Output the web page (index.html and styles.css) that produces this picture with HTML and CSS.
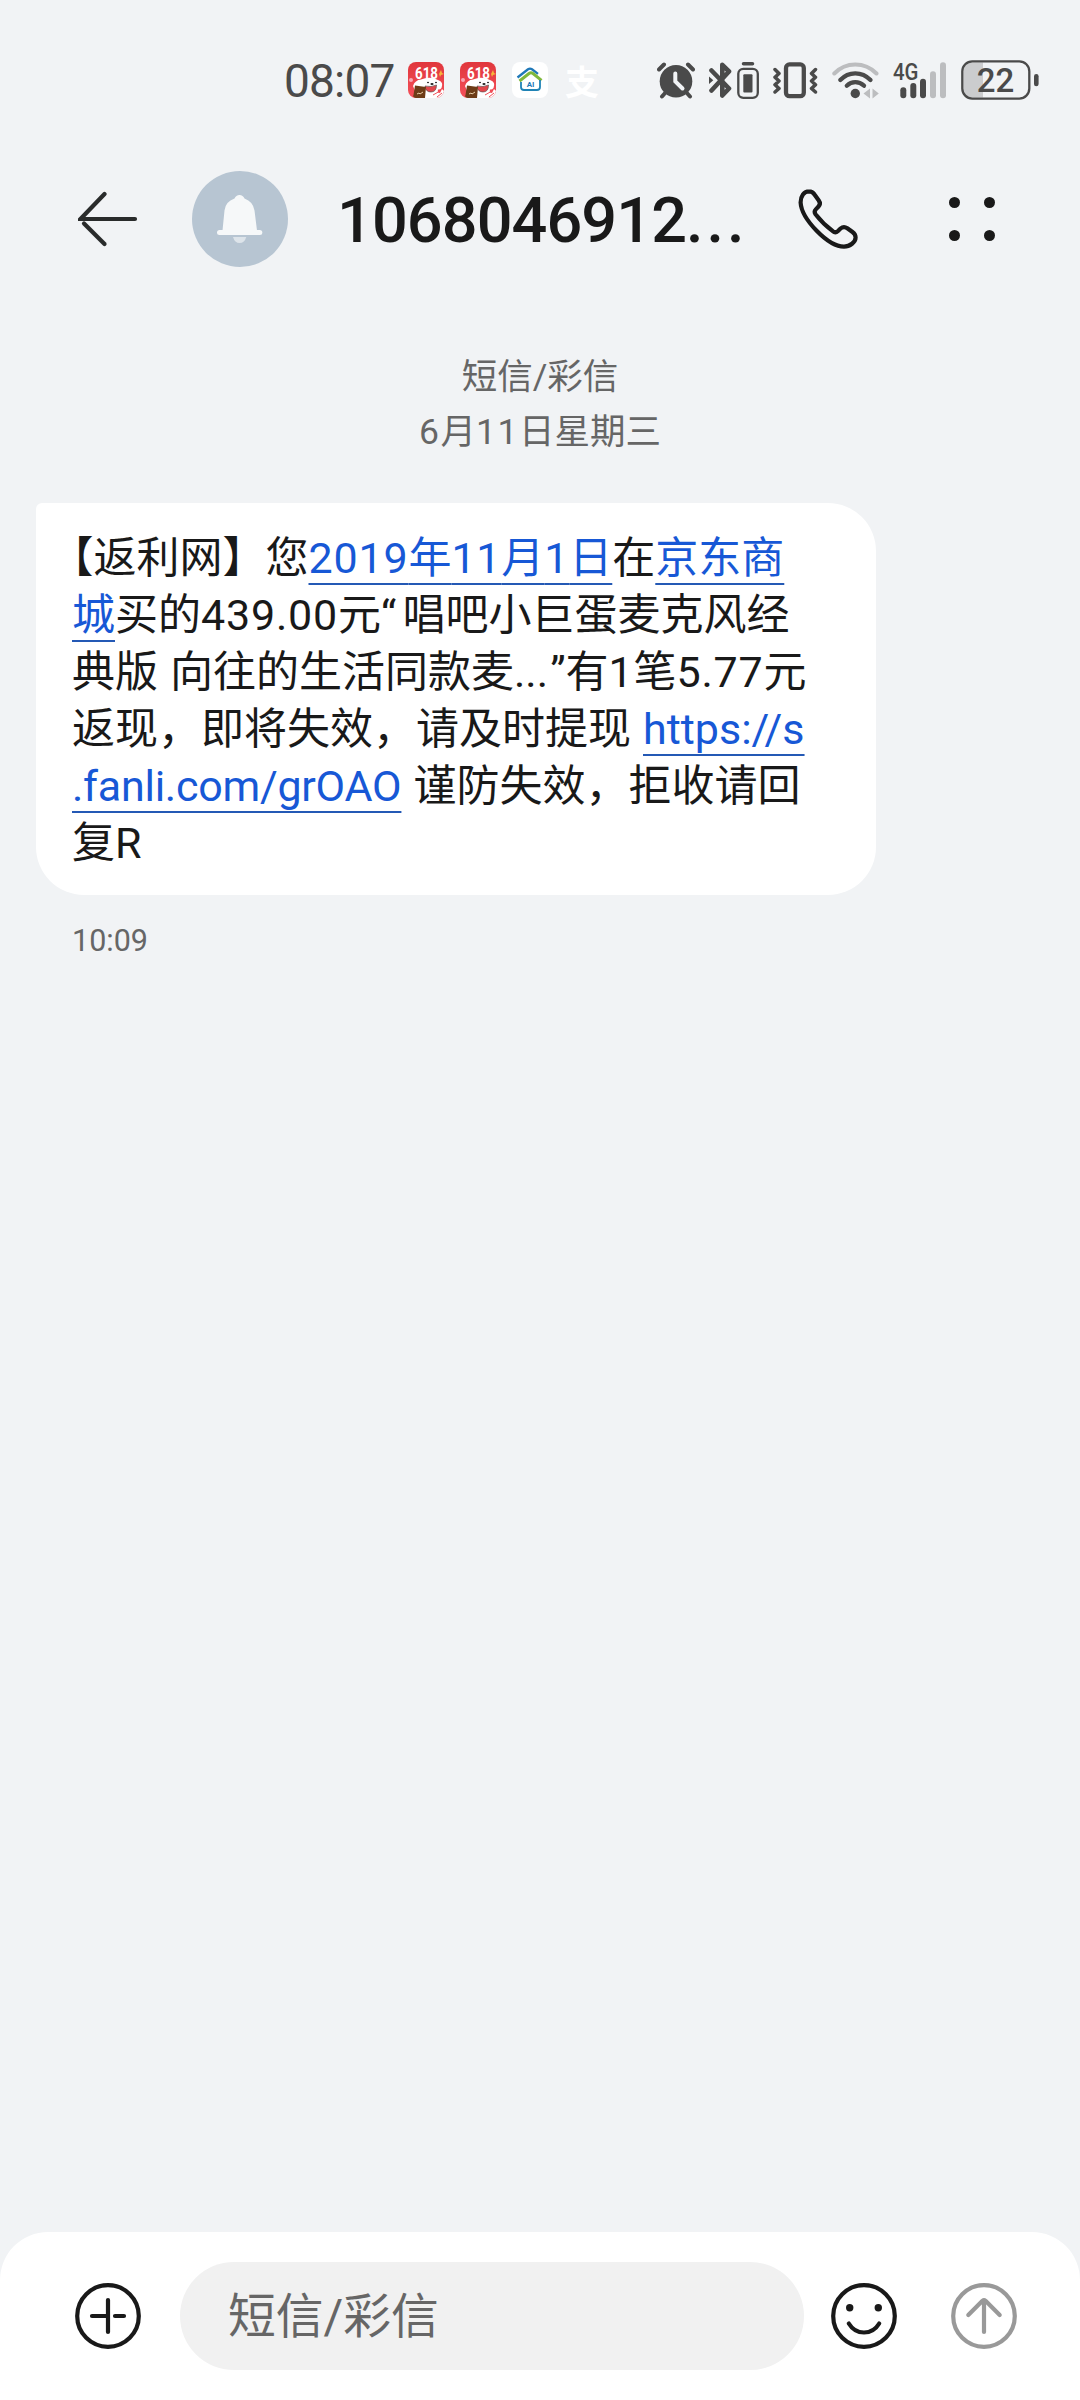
FILE: index.html
```html
<!DOCTYPE html>
<html lang="zh-CN">
<head>
    <meta charset="UTF-8">
    <meta name="viewport" content="width=device-width, initial-scale=1.0"/>
    <title>短信/彩信</title>
    <link rel="stylesheet" href="styles.css">
</head>
<body>
    <svg class="defs" width="0" height="0">
        <defs>
            <linearGradient id="promo-bg" x1="0" y1="0" x2="0" y2="1">
                <stop offset="0" stop-color="#e0363c"/>
                <stop offset="1" stop-color="#f4505a"/>
            </linearGradient>
            <symbol id="promo" viewBox="0 0 36 36">
                <rect width="36" height="36" rx="8" fill="url(#promo-bg)"/>
                <circle cx="3" cy="18" r="2" fill="#f7a6b4"/>
                <path d="M33 8l1 3 2 1-3 1-1 2-1-3z" fill="#f6b53a"/>
                <text x="7" y="16.500" class="promo-text" textLength="23" lengthAdjust="spacingAndGlyphs">618</text>
                <path d="M5 24Q7 18 13 17.500Q22 14 30 18Q36 20 33.500 26Q32 28 30 27.500Q29 31 32 31L34 27L36 29Q34 36 28 36H10z" fill="#fff"/>
                <ellipse cx="20" cy="20.500" rx="1" ry=".8" fill="#222"/>
                <ellipse cx="28" cy="20.500" rx="1" ry=".8" fill="#222"/>
                <ellipse cx="24" cy="22" rx="1.600" ry="1" fill="#222"/>
                <path d="M17 24q6 1.500 11.500-1q0 7-5.500 7t-6-6z" fill="#e2474c" stroke="#444" stroke-width=".6"/>
                <path d="M25 33l7-4M29 35l5-4" stroke="#f0505a" stroke-width="1"/>
                <path d="M7 23.500l11 1.500-1 11H8q-4-1-2.500-3z" fill="#6d3c17"/>
                <path d="M9 32l2-1 1 1 3-2" stroke="#e8cfa8" stroke-width="1" fill="none"/>
            </symbol>
        </defs>
    </svg>

    <div class="phone">
        <div class="status-bar">
            <div class="clock">08:07</div>
            <div class="notifications">
                <svg width="36" height="36"><use href="#promo"/></svg>
                <svg width="36" height="36"><use href="#promo"/></svg>
                <svg width="36" height="36" viewBox="0 0 36 36">
                    <rect width="36" height="36" rx="8" fill="#fff"/>
                    <path d="M5.500 15.500L16 7.300q2-1.300 4 0l6 4.500" fill="none" stroke="#1f78b8" stroke-width="2.300"/>
                    <path d="M7.500 19L17 11.500q2-1.500 4 0l8.500 6.800" fill="none" stroke="#7fb83c" stroke-width="3"/>
                    <path d="M9 20v5q0 3 3 3h13q3 0 3-3v-7" fill="none" stroke="#1f83b5" stroke-width="1.800"/>
                    <text x="18.500" y="24.500" class="home-text">AI</text>
                </svg>
                <span class="pay">支</span>
            </div>
            <div class="indicators">
                <svg class="alarm" width="38" height="37" viewBox="0 0 38 37">
                    <g class="line" stroke-width="4">
                        <path d="M2 7.500L7 2.500M31 2.500L36 7.500M5 34.500L9 30M33 34.500L29 30"/>
                    </g>
                    <circle cx="19" cy="19.300" r="16.300" fill="#4a4a4a"/>
                    <path d="M18.300 11.500V19.300L25.500 26.500" fill="none" stroke="#f1f3f5" stroke-width="4" stroke-linecap="round"/>
                </svg>
                <svg class="bluetooth" width="23" height="37" viewBox="0 0 23 37">
                    <path class="line" stroke-width="4.600" d="M2.500 8.500L20 26.500L13.300 33.500V2.800L20 9.500L2.500 28.500"/>
                    <path d="M0 14.500l4.300 3.700-4.300 3.700z" fill="#4a4a4a"/>
                </svg>
                <svg class="device" width="22" height="37" viewBox="0 0 22 37">
                    <path class="line" stroke-width="3.500" stroke-linecap="butt" d="M6.500 1.800H15.500"/>
                    <rect class="line" stroke-width="2.300" x="1.300" y="6.800" width="19.500" height="29" rx="5"/>
                    <rect x="6.300" y="12.300" width="9.200" height="18.300" rx="1" fill="#4a4a4a"/>
                </svg>
                <svg class="vibrate" width="45" height="37" viewBox="0 0 45 37">
                    <rect class="line" stroke-width="4.300" x="13" y="2.400" width="17.800" height="31.800" rx="3.500"/>
                    <path class="line" stroke-width="3.500" d="M2 7.500l4 4-4 3.700 4 3.800-4 3.700 4 3.800-4 3.500M42.500 7.500l-4 4 4 3.700-4 3.800 4 3.700-4 3.800 4 3.500"/>
                </svg>
                <svg class="wifi" width="47" height="37" viewBox="0 0 47 37">
                    <path class="line faint" stroke-width="4" d="M2.300 11.500Q11 2.500 23.300 2.500T44.500 11.500"/>
                    <path class="line" stroke-width="4.300" d="M8.300 18Q14.500 11.300 23.300 11.300T38.500 18"/>
                    <path class="line" stroke-width="4.300" d="M14.800 23.700Q18.500 20.200 23.300 20.200T32 23.700"/>
                    <circle cx="23.300" cy="31.500" r="4.700" fill="#4a4a4a"/>
                    <path d="M31.500 31.500L38 26.500V36.500zM40.500 26.500L46.800 31.500 40.500 36.500z" fill="#bcbdbf"/>
                </svg>
                <svg class="signal" width="53" height="37" viewBox="0 0 53 37">
                    <text x="0" y="18" class="network" textLength="25.500" lengthAdjust="spacingAndGlyphs">4G</text>
                    <g fill="#4a4a4a">
                        <rect x="7.300" y="25.300" width="6" height="11" rx="3"/>
                        <rect x="17.300" y="21" width="6" height="15.300" rx="3"/>
                        <rect x="27" y="16.700" width="6" height="19.600" rx="3"/>
                    </g>
                    <g fill="#bcbdbf">
                        <rect x="37" y="9.300" width="6" height="27" rx="3"/>
                        <rect x="47" y=".3" width="6" height="36" rx="3"/>
                    </g>
                </svg>
                <svg class="battery" width="78" height="40" viewBox="0 0 78 40">
                    <path d="M22 2.500H11Q2.500 2.500 2.500 11V29Q2.500 37.500 11 37.500H22z" fill="#cbccce"/>
                    <rect class="line" stroke-width="2.300" x="1.300" y="1.300" width="67" height="37.300" rx="10"/>
                    <rect x="73" y="14" width="4.600" height="12.300" rx="2.300" fill="#4a4a4a"/>
                    <text x="34.500" y="32" class="level">22</text>
                </svg>
            </div>
        </div><!-- .status-bar -->

        <div class="header">
            <svg class="back" width="62" height="58" viewBox="0 0 62 58">
                <g fill="none" stroke="#292b2b" stroke-width="4.200" stroke-linecap="round">
                    <path d="M57 29H2.500L26.500 4"/>
                    <path d="M6 33.500L26.500 54"/>
                </g>
            </svg>
            <svg class="avatar" width="96" height="96" viewBox="0 0 96 96">
                <circle cx="48" cy="48" r="48" fill="#b7c5d2"/>
                <path d="M30.500 59.500L32.500 39.500Q33.500 30.500 42.500 27.500Q44 24 47.500 24T52.500 27.500Q61 30.500 62.500 39.500L65 59.500z" fill="#f6f8f9"/>
                <rect x="25" y="59" width="45.300" height="5" rx="2.500" fill="#f6f8f9"/>
                <path d="M41 66H54.300Q52.500 72 47.600 72T41 66z" fill="#dde4ea"/>
            </svg>
            <h1 class="title">1068046912<span class="dots">...</span></h1>
            <svg class="call" width="60" height="60" viewBox="0 0 60 60">
                <path fill="none" stroke="#191919" stroke-width="4.200" stroke-linejoin="round" d="M11 2.300C6 2.300 2.600 7 2.600 13.500C3.500 30 30 57.600 46 57.600C52 57.600 57.600 53 57.600 48.500C57.600 46 56.500 44.500 54.500 43L49.300 39.200C47 37.600 44.500 37.800 42.500 39.500L40 42C38.300 43.600 36.500 43.700 34.800 42.200C28 37 22 31 17.500 25.200C16.300 23.500 16.300 22 17.800 20.400L20.500 17.500C22.200 15.700 22.200 13.500 20.800 11.500L16.500 5.500C15 3.200 13.300 2.300 11 2.300Z"/>
            </svg>
            <div class="more">
                <i></i><i></i><i></i><i></i>
            </div>
        </div><!-- .header -->

        <div class="thread">
            <div class="day">
                <div>短信/彩信</div>
                <div class="date"><span class="num">6</span>月<span class="num">11</span>日星期三</div>
            </div>
            <div class="bubble">【返利网】您<a><b>2019</b>年<b>11</b>月<b>1</b>日</a>在<a>京东商<br>城</a>买的<b>439.00</b>元<q class="open">“</q>唱吧小巨蛋麦克风经<br>典版<s></s>向往的生活同款麦<i>...</i><q class="close">”</q>有<b>1</b>笔<b>5.77</b>元<br>返现，即将失效，请及时提现<s></s><a>https://s</a><br><a class="url-end">.fanli.com/grOAO</a><s></s>谨防失效，拒收请回<br>复R</div>
            <div class="time">10:09</div>
        </div><!-- .thread -->

        <div class="composer">
            <svg width="66" height="66" viewBox="0 0 66 66">
                <g fill="none" stroke="#191919" stroke-width="4.200" stroke-linecap="round">
                    <circle cx="33" cy="33" r="30.800"/>
                    <path d="M33 17V49M17 33H33M40 33H49"/>
                </g>
            </svg>
            <div class="input">短信/彩信</div>
            <svg class="emoji" width="66" height="66" viewBox="0 0 66 66">
                <g fill="none" stroke="#191919" stroke-width="4.200" stroke-linecap="round">
                    <circle cx="33" cy="33" r="30.800"/>
                    <path d="M17.800 40.500C25 52.500 41 52.500 48.200 40.500"/>
                </g>
                <circle cx="18.700" cy="24.700" r="3.700" fill="#191919"/>
                <circle cx="47.300" cy="24.700" r="3.700" fill="#191919"/>
            </svg>
            <svg class="send" width="66" height="66" viewBox="0 0 66 66">
                <g fill="none" stroke="#999" stroke-width="4.200" stroke-linecap="round" stroke-linejoin="round">
                    <circle cx="33" cy="33" r="30.800"/>
                    <path d="M33 49V17.500M17.300 32L31.500 17.800Q33 16.500 34.500 17.800L48.700 32"/>
                </g>
            </svg>
        </div><!-- .composer -->
    </div><!-- .phone -->
</body>
</html>
```
FILE: styles.css
```css
* {
    margin: 0;
    padding: 0;
    box-sizing: border-box;
}

body {
    background: #f1f3f5;
    font-family: Roboto, "Noto Sans CJK SC", sans-serif;
    color: #191919;
}

svg {
    display: block;
    flex: none;
}

.defs {
    position: absolute;
}

.phone {
    width: 1080px;
    height: 2400px;
    display: flex;
    flex-direction: column;
    overflow: hidden;
}

/* Status bar */
.status-bar {
    height: 122px;
    padding: 38px 0 0 284px;
    display: flex;
    align-items: center;
}

.clock {
    width: 124px;
    font-size: 46px;
    letter-spacing: -0.8px;
    line-height: 84px;
    padding-top: 2px;
    color: #4a4a4a;
}

.notifications {
    display: flex;
    align-items: center;
    gap: 16px;
    width: 249px;
}

.promo-text {
    font: bold 16.5px Roboto, sans-serif;
    fill: #fff;
}

.home-text {
    font: bold 8px Roboto, sans-serif;
    fill: #1f78b8;
    text-anchor: middle;
}

.pay {
    margin-left: 1px;
    font-size: 34px;
    font-weight: bold;
    line-height: normal;
    color: #fff;
}

.indicators {
    display: flex;
    align-items: center;
}

.line {
    fill: none;
    stroke: #4a4a4a;
    stroke-linecap: round;
    stroke-linejoin: round;
}

.faint { stroke: #bcbdbf; }

.bluetooth { margin-left: 14px; }
.device { margin-left: 5px; }
.vibrate { margin-left: 14px; }
.wifi { margin-left: 14px; }
.signal { margin-left: 14px; }
.battery { margin-left: 15px; }

.network {
    font: 500 24px Roboto, sans-serif;
    fill: #4a4a4a;
}

.level {
    font: 500 33px Roboto, sans-serif;
    fill: #4a4a4a;
    text-anchor: middle;
}

/* Conversation header */
.header {
    height: 194px;
    padding-left: 78px;
    display: flex;
    align-items: center;
}

.avatar { margin-left: 52px; }

.title {
    width: 418px;
    margin-left: 49px;
    padding-top: 3px;
    font-size: 63px;
    font-weight: 500;
    line-height: 96px;
    letter-spacing: -0.9px;
    white-space: nowrap;
}

.dots { letter-spacing: 3px; }
.call { margin-left: 43px; }

.more {
    margin-left: 91px;
    display: grid;
    grid-template-columns: 11px 11px;
    gap: 22px 24px;
}

.more i {
    width: 11px;
    height: 11px;
    border-radius: 50%;
    background: #191919;
}

/* Messages */
.thread {
    flex: 1;
    padding: 34px 36px 0;
}

.day {
    height: 153px;
    font-size: 35.5px;
    line-height: 55px;
    text-align: center;
    color: #666;
}

.date .num { letter-spacing: 1.6px; }

.bubble {
    width: 840px;
    height: 392px;
    padding: 27px 0 0 36px;
    border-radius: 6px 48px 48px 48px;
    background: #fff;
    font-size: 43px;
    line-height: 57.1px;
    text-indent: -0.5em;
    white-space: nowrap;
    text-spacing-trim: space-all;
}

.bubble > * {
    text-indent: 0;
}

.bubble a {
    color: #1758d6;
    text-decoration: underline 2px #2459b5;
    text-underline-offset: 10px;
    text-decoration-skip-ink: none;
}

.bubble b {
    font-weight: normal;
    letter-spacing: 0.8px;
}

.bubble s {
    display: inline-block;
    width: 12px;
}

.bubble i {
    display: inline-block;
    width: 30px;
    font-style: normal;
}

.bubble q {
    display: inline-block;
    width: 21.5px;
    quotes: none;
}

.bubble .close { text-align: right; }
.bubble .url-end { letter-spacing: -0.25px; }

.time {
    margin: 28px 0 0 36px;
    font-size: 30.5px;
    line-height: 36px;
    color: #666;
}

/* Bottom bar */
.composer {
    height: 168px;
    padding: 0 63px 0 75px;
    display: flex;
    align-items: center;
    background: #fff;
    border-radius: 48px 48px 0 0;
}

.input {
    width: 624px;
    height: 108px;
    margin-left: 39px;
    padding-left: 48px;
    border-radius: 54px;
    background: #f1f1f1;
    font-size: 47.8px;
    line-height: 110px;
    color: #666;
}

.emoji { margin-left: 27px; }
.send { margin-left: 54px; }
```
